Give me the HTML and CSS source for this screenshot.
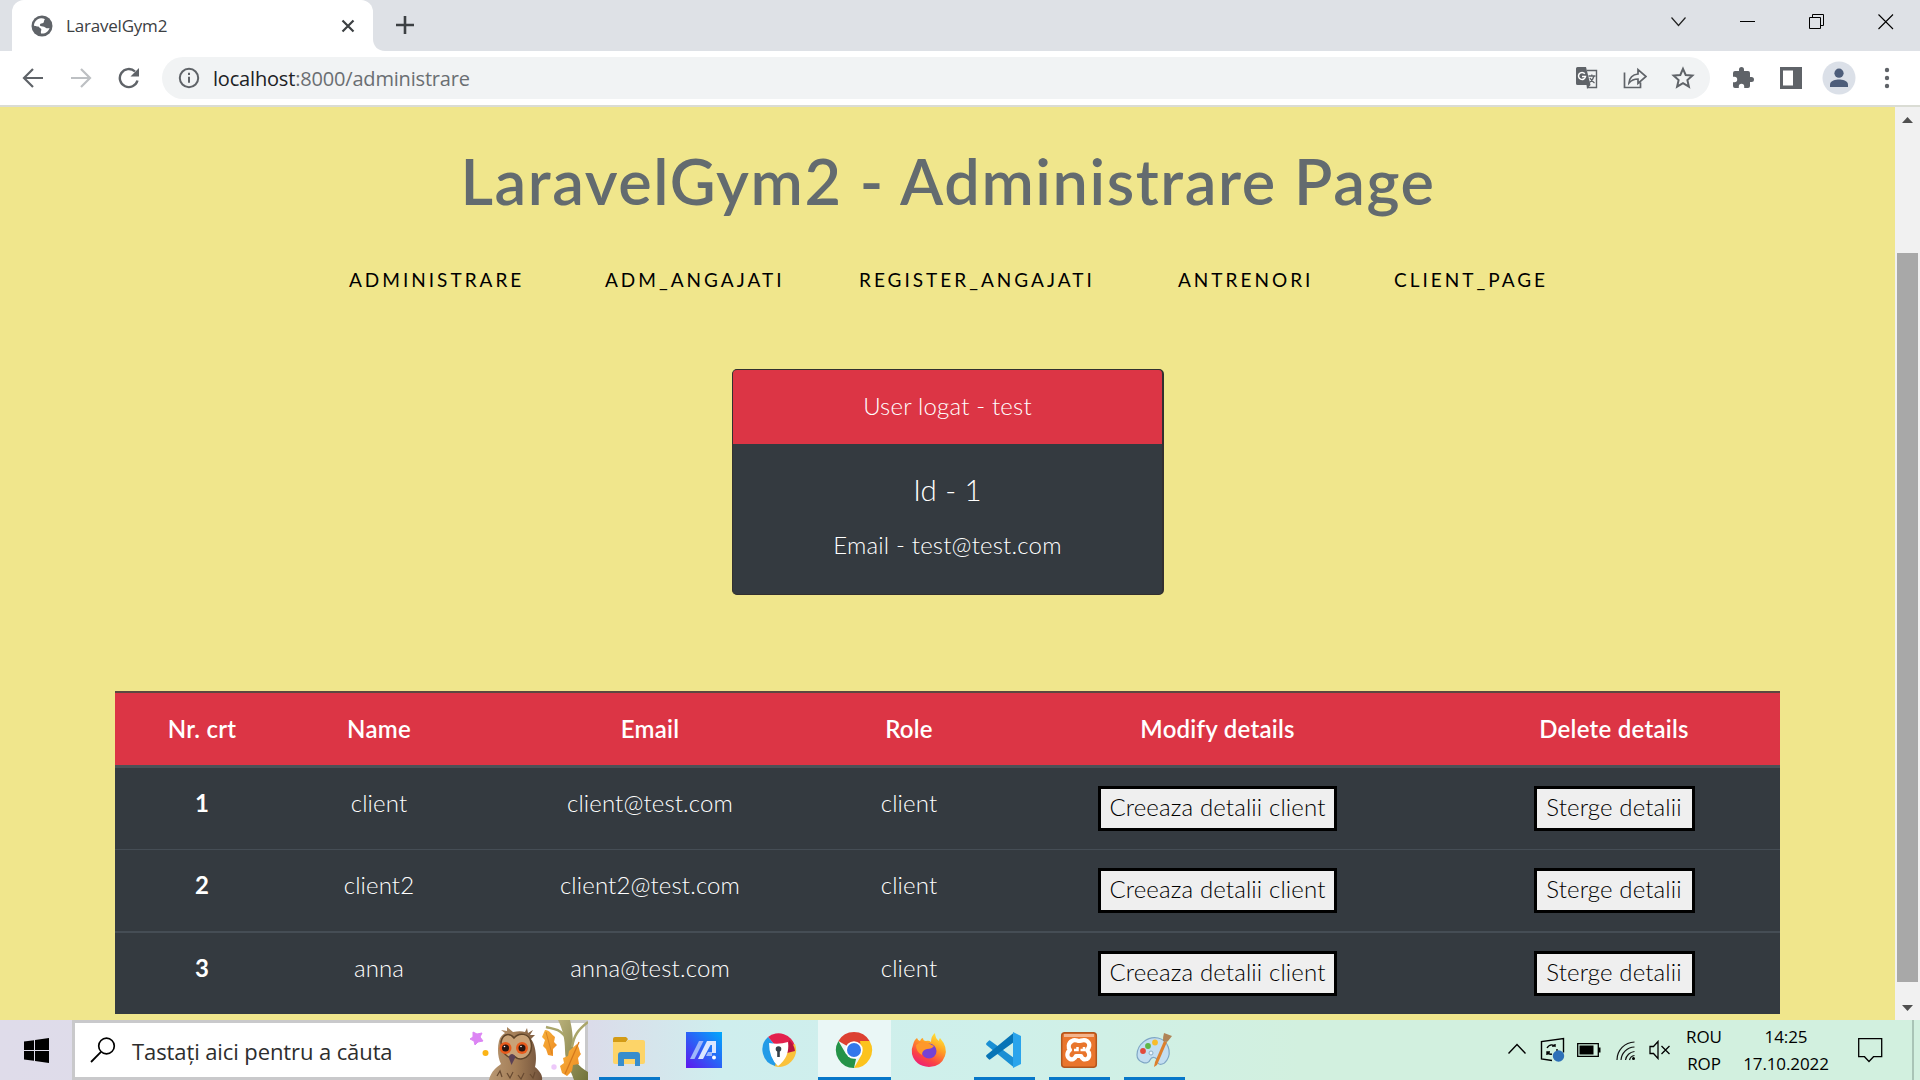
FILE: index.html
```html
<!DOCTYPE html>
<html lang="ro">
<head>
<meta charset="utf-8">
<title>LaravelGym2</title>
<link rel="stylesheet" href="styles.css">
</head>
<body>
<div class="screen">
  <header class="tabstrip">
    <div class="tab">
      <svg class="favicon" width="22" height="22" viewBox="0 0 22 22"><circle cx="11" cy="11" r="10.5" fill="#5f6368"/><path d="M10 3.2C6 3.6 3 7 3 10.6c1 .9 3 1 4.500.8 1 1.600 2.500 1.700 2.800 2.900.2 1.200-.8 2-.3 4.200 4 .6 7.500-1.800 8.500-5.500-1.500.6-3 .4-4.200-.6-1.400-1.200-3.600-.9-4.900-1.400-.9-.8-.4-2.300.9-2.500 1.500-.1 2.400-.4 2.600-1.700.1-1 .3-1.900 1.100-2.600-1.200-.8-2.500-1.100-4-1z" fill="#fff"/></svg>
      <span class="tab-title">LaravelGym2</span>
      <svg class="tab-close" width="14" height="14" viewBox="0 0 14 14"><path d="M1.500 1.500l11 11M12.500 1.500l-11 11" stroke="#3c4043" stroke-width="2.200"/></svg>
    </div>
    <svg class="tab-foot" width="12" height="12" viewBox="0 0 12 12"><path d="M0 0v12h12C5 12 0 7 0 0z" fill="#fff"/></svg>
    <svg class="new-tab" width="20" height="20" viewBox="0 0 20 20"><path d="M10 1v18M1 10h18" stroke="#3c4043" stroke-width="2.600"/></svg>
    <div class="window-buttons">
      <svg width="16" height="16" viewBox="0 0 16 16"><path d="M.5 3.500l7 8 7-8" fill="none" stroke="#222" stroke-width="1.200"/></svg>
      <svg width="16" height="16" viewBox="0 0 16 16"><path d="M0 7.500h15" stroke="#000"/></svg>
      <svg width="16" height="16" viewBox="0 0 16 16"><path d="M.5 3.500h11v11H.5zM3.500 3.500v-3h11v11h-3" fill="none" stroke="#000"/></svg>
      <svg width="16" height="16" viewBox="0 0 16 16"><path d="M.5.5l14.500 14.500M15 .5L.5 15" stroke="#000" stroke-width="1.100"/></svg>
    </div>
  </header>
  <div class="toolbar">
    <div class="nav-buttons">
      <svg width="22" height="22" viewBox="0 0 22 22"><path d="M21 11H3M11 2l-9 9 9 9" fill="none" stroke="#5f6368" stroke-width="2.200"/></svg>
      <svg width="22" height="22" viewBox="0 0 22 22"><path d="M1 11h18M11 2l9 9-9 9" fill="none" stroke="#bdc0c3" stroke-width="2.200"/></svg>
      <svg width="22" height="22" viewBox="0 0 22 22"><path d="M19.500 13.500A9 9 0 1 1 17 4.500" fill="none" stroke="#5f6368" stroke-width="2.400"/><path d="M21 1v8.500h-8.500z" fill="#5f6368"/></svg>
    </div>
    <div class="omnibox">
      <svg width="22" height="22" viewBox="0 0 22 22"><circle cx="11" cy="11" r="9.200" fill="none" stroke="#5f6368" stroke-width="2"/><path d="M11 9.800v6M11 5.800v2.200" stroke="#5f6368" stroke-width="2"/></svg>
      <span class="url"><b>localhost</b>:8000/administrare</span>
      <div class="omni-actions">
        <svg width="24" height="24" viewBox="0 0 24 24"><path d="M12 4.500h9.500v17H12.500" fill="#f1f3f4" stroke="#5f6368" stroke-width="1.400"/><path d="M2.500 1h8.500l4.500 18H2.500A1.500 1.500 0 0 1 1 17.500v-15A1.500 1.500 0 0 1 2.500 1zM11.500 19h4l-3.500 4z" fill="#5f6368"/><path d="M9.800 7.800A3.500 3.500 0 1 0 10.500 10.500H7" fill="none" stroke="#fff" stroke-width="1.500"/><path d="M13.500 10h7M16.800 8.500V10M19 10c-.6 3-2.500 5-4.500 6.500M15 12c1 2 2.500 3.500 4.500 5" fill="none" stroke="#5f6368" stroke-width="1.300"/></svg>
        <svg width="24" height="24" viewBox="0 0 24 24"><path d="M1.500 6.500v15h16v-5M6 17c.5-6 4-8.500 9-9V3.500l8 7-8 7v-4.500c-4 0-6.500 1-9 4z" fill="none" stroke="#5f6368" stroke-width="1.700"/></svg>
        <svg width="24" height="24" viewBox="0 0 24 24"><path d="M12 2.800l2.700 6.200 6.700.6-5 4.500 1.500 6.600-5.900-3.500-5.900 3.500 1.500-6.600-5-4.500 6.700-.6z" fill="none" stroke="#5f6368" stroke-width="2"/></svg>
      </div>
    </div>
    <div class="extensions">
      <svg width="24" height="24" viewBox="0 0 24 24"><path d="M20.500 11H19V7a2 2 0 0 0-2-2h-4V3.500a2.500 2.500 0 0 0-5 0V5H4a2 2 0 0 0-2 2v3.800h1.500a2.700 2.700 0 0 1 0 5.400H2V20a2 2 0 0 0 2 2h3.800v-1.500a2.700 2.700 0 0 1 5.400 0V22H17a2 2 0 0 0 2-2v-4h1.500a2.500 2.500 0 0 0 0-5z" fill="#5f6368"/></svg>
      <svg width="24" height="24" viewBox="0 0 24 24"><path d="M1 1h22v22H1zM4 4.500v15h10v-15z" fill="#5f6368" fill-rule="evenodd"/></svg>
      <svg width="34" height="34" viewBox="0 0 34 34"><circle cx="17" cy="17" r="16.500" fill="#dbe0e8"/><circle cx="17" cy="12.200" r="4.600" fill="#4d5d7a"/><path d="M8 26v-2.500c0-4 6-5 9-5s9 1 9 5V26z" fill="#4d5d7a"/></svg>
      <svg width="24" height="24" viewBox="0 0 24 24"><circle cx="12" cy="4" r="2.200" fill="#5f6368"/><circle cx="12" cy="12" r="2.200" fill="#5f6368"/><circle cx="12" cy="20" r="2.200" fill="#5f6368"/></svg>
    </div>
  </div>
  <div class="viewport">
    <main class="page">
      <h1>LaravelGym2 - Administrare Page</h1>
      <nav><a>ADMINISTRARE</a><a>ADM_ANGAJATI</a><a>REGISTER_ANGAJATI</a><a>ANTRENORI</a><a>CLIENT_PAGE</a></nav>
      <section class="card">
        <div class="card-header">User logat - test</div>
        <div class="card-body"><h2>Id - 1</h2><p>Email - test@test.com</p></div>
      </section>
      <table>
        <colgroup><col class="c-nr"><col class="c-name"><col class="c-email"><col class="c-role"><col class="c-modify"><col class="c-delete"></colgroup>
        <thead><tr><th>Nr. crt</th><th>Name</th><th>Email</th><th>Role</th><th>Modify details</th><th>Delete details</th></tr></thead>
        <tbody>
          <tr><th>1</th><td>client</td><td>client@test.com</td><td>client</td><td><button class="modify">Creeaza detalii client</button></td><td><button class="delete">Sterge detalii</button></td></tr>
          <tr><th>2</th><td>client2</td><td>client2@test.com</td><td>client</td><td><button class="modify">Creeaza detalii client</button></td><td><button class="delete">Sterge detalii</button></td></tr>
          <tr><th>3</th><td>anna</td><td>anna@test.com</td><td>client</td><td><button class="modify">Creeaza detalii client</button></td><td><button class="delete">Sterge detalii</button></td></tr>
        </tbody>
      </table>
    </main>
    <div class="scrollbar">
      <svg width="11" height="6" viewBox="0 0 11 6"><path d="M0 6L5.500 0 11 6z" fill="#505050"/></svg>
      <div class="thumb"></div>
      <svg width="11" height="6" viewBox="0 0 11 6"><path d="M0 0l5.500 6L11 0z" fill="#505050"/></svg>
    </div>
  </div>
  <footer class="taskbar">
    <div class="start"><svg width="25" height="25" viewBox="0 0 25 25"><path d="M0 3.500l10-1.300V12H0zM11 2l14-2v12H11zM0 13h10v9.800L0 21.500zM11 13h14v12l-14-2z" fill="#000"/></svg></div>
    <div class="search">
      <svg width="26" height="26" viewBox="0 0 26 26"><circle cx="16.500" cy="9" r="7.800" fill="none" stroke="#000" stroke-width="1.700"/><path d="M11 14.800L1 25" stroke="#000" stroke-width="1.800"/></svg>
      <span>Tastați aici pentru a căuta</span>
      <svg class="owl" width="120" height="60" viewBox="0 0 120 60">
        <defs>
          <linearGradient id="body" x1="0" x2="1"><stop offset="0" stop-color="#b99873"/><stop offset=".5" stop-color="#a37d56"/><stop offset="1" stop-color="#70513a"/></linearGradient>
          <linearGradient id="bark" x1="0" y1="0" x2="1" y2="1"><stop offset="0" stop-color="#b9b07a"/><stop offset="1" stop-color="#71733a"/></linearGradient>
          <linearGradient id="leaf" x1="0" y1="0" x2="1" y2="1"><stop offset="0" stop-color="#f7b23c"/><stop offset="1" stop-color="#ee8a22"/></linearGradient>
        </defs>
        <path d="M90 0h12c3 12 3 22 3 28 0 12 5 18 15 24v8h-14c-4-12-9-18-9-30 0-10-2-20-7-30z" fill="url(#bark)"/>
        <path d="M97 16C91 9 86 9 78 7M104 27c2-12 6-17 16-25" fill="none" stroke="#aaa56a" stroke-width="2.500"/>
        <path d="M5 12l4 2 5-1-2 4 3 4-5 1-3 3-1-4-4-2 3-2z" fill="#dc85f4" stroke="#dc85f4" stroke-linejoin="round"/>
        <circle cx="17.500" cy="33" r="3" fill="#fbb416"/><circle cx="86" cy="47" r="2.700" fill="#edc9fa"/>
        <path d="M21 60c2-9 8-13 12-16-3-6-4-15-2-23 1-4 3-6 6-8l-4-3 6 1 0-4 6 5c5-1 9-1 12 0l2-4 1 5 5-3-3 5 5 0-4 4c5 6 6 20 4 28 5 4 8 9 7 13z" fill="url(#body)"/>
        <path d="M33 22c2-9 9-9 13-4 5-6 15-5 17 4 2 10-3 16-10 17-3 0-5-1-7-3-3 3-12 1-13-14z" fill="#c9a277" stroke="#5f4429" stroke-width="1.500"/>
        <circle cx="37.500" cy="28" r="6" fill="#e95b1c"/><circle cx="54" cy="28" r="6" fill="#e95b1c"/>
        <circle cx="37.500" cy="28" r="3.500" fill="#281510"/><circle cx="54" cy="28" r="3.500" fill="#281510"/><circle cx="36.500" cy="26.500" r=".8" fill="#fff"/><circle cx="53" cy="26.500" r=".8" fill="#fff"/>
        <path d="M40.500 37c2-4 5-4 7 0l-4 8z" fill="#5b4155"/>
        <path d="M29 56l3-5 2 6M39 53l3 5 3-6M50 55l3 4 3-6M62 54l3 4 2-6" fill="none" stroke="#684a31" stroke-width="1.200"/>
        <path d="M77 10c5 0 6 4 10 7l-1 5 3 3-4 4v7l-5-1-2-6-3-3 2-6-3-3z" fill="url(#leaf)"/><path d="M78 12l6 22" stroke="#d98522"/>
        <path d="M109 24c3 5 2 7 4 10l-3 4 1 6-6 1-1 6-5 5-5-3-2-7 4-3-1-5 5-2 1-5z" fill="url(#leaf)"/><path d="M111 22L97 54" stroke="#d4781d" stroke-width="1.200"/>
      </svg>
    </div>
    <div class="apps">
      <div class="app open"><svg width="38" height="38" viewBox="0 0 38 38"><path d="M3 8q0-2 2-2h11l2 2-2 3H3z" fill="#d39b16"/><path d="M3 11h13l2-2h15q2 0 2 2v20q0 2-2 2H5q-2 0-2-2z" fill="#fdd468"/><path d="M8 35V24q0-3 3-3h16q3 0 3 3v11h-5v-7H14v7z" fill="#378dcd"/></svg></div>
      <div class="app"><svg width="38" height="38" viewBox="0 0 38 38"><defs><linearGradient id="asus" x1="0" y1="1" x2="1" y2="0"><stop stop-color="#5e16ee"/><stop offset=".5" stop-color="#2b62f6"/><stop offset="1" stop-color="#00a9fb"/></linearGradient></defs><path d="M1 1h36v36H1z" fill="url(#asus)"/><path d="M5 28l9-18h4.500L9.500 28z" fill="#9eb7fb"/><path d="M13 28l9-18h9v12h-4v-8h-1.500L18 28z" fill="#dbe7ff"/><path d="M21 25l2-4h4v4z" fill="#9eb7fb"/><circle cx="29" cy="26.500" r="2" fill="#fff"/></svg></div>
      <div class="app"><svg width="38" height="38" viewBox="0 0 38 38"><path d="M19 19L8 6a17 17 0 0 1 27 9z" fill="#e3214d"/><path d="M19 19l16-6a17 17 0 0 1-21 22z" fill="#fac23c"/><path d="M19 19l-4 16A17 17 0 0 1 8 6z" fill="#239be7"/><path d="M29 9a17 17 0 0 1 6 11l-8 2z" fill="#b8143e"/><path d="M9 12q10 2 19-1 2 15-10 24Q9 27 9 12z" fill="#fff"/><circle cx="18.500" cy="18" r="2.800" fill="#353f48"/><path d="M17.200 19h2.600v7h-2.600z" fill="#353f48"/></svg></div>
      <div class="app open active"><svg width="38" height="38" viewBox="0 0 38 38"><path d="M19 19L3.400 10A18 18 0 0 1 34.600 10z" fill="#dc4132"/><path d="M34.600 10A18 18 0 0 1 19 37l8-14-2-13z" fill="#fcc31d"/><path d="M19 37A18 18 0 0 1 3.400 10L11 23l10 5z" fill="#249348"/><circle cx="19" cy="19" r="8.700" fill="#fff"/><circle cx="19" cy="19" r="7" fill="#3478eb"/></svg></div>
      <div class="app"><svg width="38" height="38" viewBox="0 0 38 38"><defs><linearGradient id="fox" x1=".85" y1="0" x2=".3" y2="1"><stop stop-color="#fff13b"/><stop offset=".4" stop-color="#ffa024"/><stop offset=".75" stop-color="#fb4444"/><stop offset="1" stop-color="#ed1e79"/></linearGradient></defs><path d="M3 14Q4 9 7 7q1 3 3 3 1-3 3-3 0 3 3 3 3-1 5 1 0-6 4-9 0 5 4 8 0-2 1-3 8 9 5 18-4 11-16 11Q5 35 2 23q-1-5 1-9z" fill="url(#fox)"/><circle cx="19" cy="20" r="7.500" fill="#7542d5"/><path d="M6 14q6-5 12-2l6 3q-2 3-7 3-5 1-5 6-6-3-6-10z" fill="#ff982b"/></svg></div>
      <div class="app open"><svg width="38" height="38" viewBox="0 0 38 38"><path d="M5 9.500L29 27v9.500L1.500 14q-1-1 0-2l2-2q1-1 1.500-.5z" fill="#1a8fd4"/><path d="M5 28.500L29 11V1.500L1.500 24q-1 1 0 2l2 2q1 1 1.500.5z" fill="#0774b6"/><path d="M28 1l8 4v28l-8 4z" fill="#2aa4ec"/></svg></div>
      <div class="app open"><svg width="38" height="38" viewBox="0 0 38 38"><rect x="1.700" y="1.700" width="34.600" height="34.600" rx="3" fill="#e9752c" stroke="#b3561d" stroke-width="1.500"/><path d="M4 3h30v3H4z" fill="#f3b48d"/><path d="M12 10c3-2 5 0 7 0s5-2 8 0c4 3 2 7 0 9 3 3 3 7 0 9-3 1-5 0-6-3h-5c-1 3-4 4-6 3-4-2-3-7 0-9-2-2-2-7 2-9z" fill="none" stroke="#fff" stroke-width="4.200" stroke-linejoin="round"/><path d="M14 19h3.500v-3M24 16v3h-3.500" fill="none" stroke="#fff" stroke-width="2.500"/></svg></div>
      <div class="app open"><svg width="38" height="38" viewBox="0 0 38 38"><path d="M2 24C2 13 13 5 23 7s14 14 9 22c-3 5-9 6-10 1 0-4-5-5-7-1-2 6-13 2-13-5z" fill="#c3def1" stroke="#7fa6c5" stroke-width="1.200"/><circle cx="8" cy="20" r="2.900" fill="#e2493c"/><circle cx="13" cy="15" r="2.900" fill="#5fb747"/><circle cx="20" cy="11.500" r="2.900" fill="#f8bc2b"/><circle cx="16" cy="22" r="2" fill="#eef7fd" stroke="#8caec6"/><path d="M19 36l1-5L29 10l3 1-10 23z" fill="#dc802e"/><path d="M28 10q0-5 1-8l8 3q-3 4-5 6z" fill="#b08457"/></svg></div>
    </div>
    <div class="tray">
      <svg class="caret" width="18" height="12" viewBox="0 0 18 12"><path d="M.5 10.500L9 1.500l8.500 9" fill="none" stroke="#000" stroke-width="1.400"/></svg>
      <svg class="sync" width="26" height="26" viewBox="0 0 26 26"><path d="M12 23.500L1.500 22V4.500l22-3v14" fill="none" stroke="#000" stroke-width="1.400"/><path d="M7 11q3-5 8-2v-2M15 9h-3M17 12v2M7 18v-3h3M7 15q2 3 5 2" fill="none" stroke="#000" stroke-width="1.400"/><circle cx="18.500" cy="19" r="5.700" fill="#2e70b8"/></svg>
      <svg class="battery" width="24" height="14" viewBox="0 0 24 14"><path d="M.7.700h20.600v12.600H.7z" fill="none" stroke="#000" stroke-width="1.300"/><path d="M2.500 2.500h14v9h-14zM21 4.500h2.500v5H21z"/></svg>
      <svg class="wifi" width="20" height="20" viewBox="0 0 20 20"><path d="M1 19A18 18 0 0 1 18.500 1M5 19A14 14 0 0 1 18.500 6M9.500 19a10 10 0 0 1 9-8.500M13.500 19a6 6 0 0 1 5-4.500" fill="none" stroke="#111" stroke-width="1.200"/><circle cx="17.500" cy="17.500" r="1.500"/></svg>
      <svg class="sound" width="22" height="20" viewBox="0 0 22 20"><path d="M1 6.500h3.500L9 1.500v17l-4.500-5H1zM12.500 6l8 8M20.500 6l-8 8" fill="none" stroke="#000" stroke-width="1.300"/></svg>
      <div class="lang"><span>ROU</span><span>ROP</span></div>
      <div class="clock"><span>14:25</span><span>17.10.2022</span></div>
      <svg class="notice" width="25" height="25" viewBox="0 0 25 25"><path d="M.7.700h23v18h-8.200L11 23.500l-4.500-4.800H.7z" fill="none" stroke="#000" stroke-width="1.300"/></svg>
      <div class="peek"></div>
    </div>
  </footer>
</div>
</body>
</html>
```

FILE: styles.css
```css
* { box-sizing: border-box; }
body { margin: 0; }
svg { display: block; flex: none; }
.screen {
  width: 1920px;
  height: 1080px;
  display: flex;
  flex-direction: column;
  overflow: hidden;
  font-family: "Open Sans", "Noto Sans", sans-serif;
}

/* browser frame */
.tabstrip { height: 51px; flex: none; display: flex; background: #dee1e6; padding-left: 12px; }
.tab { width: 361px; height: 51px; display: flex; align-items: center; background: #fff; border-radius: 12px 12px 0 0; padding: 0 18px 0 19px; }
.tab-title { margin-left: 13px; flex: 1; font-size: 17px; letter-spacing: -0.2px; color: #3c4043; }
.tab-foot { align-self: flex-end; }
.new-tab { margin: 15px 0 0 10px; }
.window-buttons { margin: 14px 26px 0 auto; display: flex; gap: 53px; }
.toolbar { height: 56px; flex: none; display: flex; align-items: center; background: #fff; border-bottom: 2px solid #dadcd4; padding: 0 21px 0 22px; }
.nav-buttons { display: flex; gap: 26px; width: 140px; }
.omnibox { width: 1548px; height: 42px; border-radius: 21px; background: #f1f3f4; display: flex; align-items: center; padding: 0 15px 0 16px; }
.url { margin-left: 13px; font-size: 20px; letter-spacing: -0.18px; color: #6a6e72; }
.url b { font-weight: 400; color: #202124; }
.omni-actions { display: flex; gap: 24px; margin-left: auto; }
.extensions { display: flex; align-items: center; margin-left: auto; gap: 19px; }
.extensions svg:first-child { margin-right: 5px; }

/* page */
.viewport { height: 913px; flex: none; display: flex; overflow: hidden; }
.page { flex: 1; background: #f0e68c; padding: 34px 0 0 115px; font-family: Lato, "Open Sans", sans-serif; font-weight: 300; }
h1 { margin: 0; width: 1666px; text-align: center; font-size: 63px; line-height: 80px; font-weight: 600; letter-spacing: 1.6px; color: #636b6f; }
nav { margin: 44px 0 0 234px; display: grid; grid-template-columns: 256px 254px 319px 216px auto; font-size: 19px; line-height: 30px; font-weight: 400; letter-spacing: 3px; color: #000; }
.card { margin: 74px 0 0 617px; width: 432px; height: 226px; border: 1px solid #33302f; border-right-width: 2px; border-radius: 5px; background: #343a40; color: #fff; text-align: center; overflow: hidden; font-size: 24px; line-height: 36px; letter-spacing: 0.18px; }
.card-header { height: 74px; padding-top: 18px; background: #dc3545; }
.card-body { padding-top: 28px; }
.card h2 { margin: 0; font-size: 29.5px; line-height: 36px; font-weight: 300; }
.card p { margin: 19px 0 0; }
table { margin-top: 96px; width: 1665px; table-layout: fixed; border-collapse: separate; border-spacing: 0; background: #343a40; color: #fff; text-align: center; font-size: 24px; line-height: 36px; letter-spacing: 0.13px; }
.c-nr { width: 174px; }
.c-name { width: 180px; }
.c-email { width: 362px; }
.c-role { width: 156px; }
.c-modify { width: 461px; }
.c-delete { width: 332px; }
th, td { padding: 17px 0 0; vertical-align: top; }
thead th { height: 77px; padding-top: 18px; background: #dc3545; border-top: 2px solid #5c4840; border-bottom: 3px solid #4b5157; font-weight: 600; letter-spacing: 0.25px; }
tbody th { font-weight: 700; }
tbody tr { height: 81px; }
tbody tr:nth-child(2) { height: 82px; }
tbody tr:nth-child(3) { height: 83px; }
tbody tr:nth-child(2) > * { border-top: 1px solid #454d55; }
tbody tr:nth-child(3) > * { border-top: 2px solid #454d55; }
button { display: block; margin: 1px auto 0; height: 45px; padding: 0 0 3px; border: 3px solid #000; background: #efefef; color: #000; font: inherit; line-height: 36px; letter-spacing: 0.13px; white-space: nowrap; }
.modify { width: 239px; }
.delete { width: 161px; }
.scrollbar { width: 25px; background: #f1f1f1; display: flex; flex-direction: column; align-items: center; padding: 10px 0 9px; }
.thumb { width: 21px; height: 729px; margin: 130px 0 auto; background: #a8a8a8; }

/* taskbar */
.taskbar { height: 60px; flex: none; display: flex; background: linear-gradient(90deg, #dfdcea 0, #dbdcea 590px, #cfeeee 720px, #cff0ea 1000px, #d2f0df 1300px, #d2f0df 100%); }
.start { width: 72px; padding: 18px 0 0 24px; }
.search { width: 516px; display: flex; align-items: center; background: #fff; border: 3px solid #c9c9cb; padding-left: 15px; }
.search span { margin: 0 auto 0 16px; padding-top: 1px; font-size: 22px; letter-spacing: -0.1px; color: #2d2d2d; white-space: nowrap; }
.owl { margin: 0 -3px; }
.apps { display: flex; padding-left: 4px; }
.app { width: 75px; height: 60px; padding: 11px 0 0; display: flex; flex-direction: column; align-items: center; }
.app svg { margin-right: 1px; }
.app.open::after { content: ""; width: 61px; height: 3px; margin-top: 8px; background: #0877c9; }
.app.active { width: 73px; margin: 0 1px; background: #eaf7f6; }
.app.active::after { width: 73px; }
.tray { margin-left: auto; display: flex; font-size: 17px; line-height: 27px; letter-spacing: -0.1px; color: #000; }
.caret { margin: 23px 14px 0 0; }
.sync { margin: 17px 11px 0 0; }
.battery { margin: 23px 15px 0 0; }
.wifi { margin: 21px 13px 0 0; }
.sound { margin: 20px 0 0; }
.lang, .clock { display: flex; flex-direction: column; align-items: center; padding-top: 3px; }
.lang { width: 36px; margin-left: 15px; }
.clock { width: 88px; margin-left: 20px; }
.notice { margin: 18px 0 0 28px; }
.peek { width: 2px; margin: 0 6px 0 29px; background: #a9c4b6; }
```
